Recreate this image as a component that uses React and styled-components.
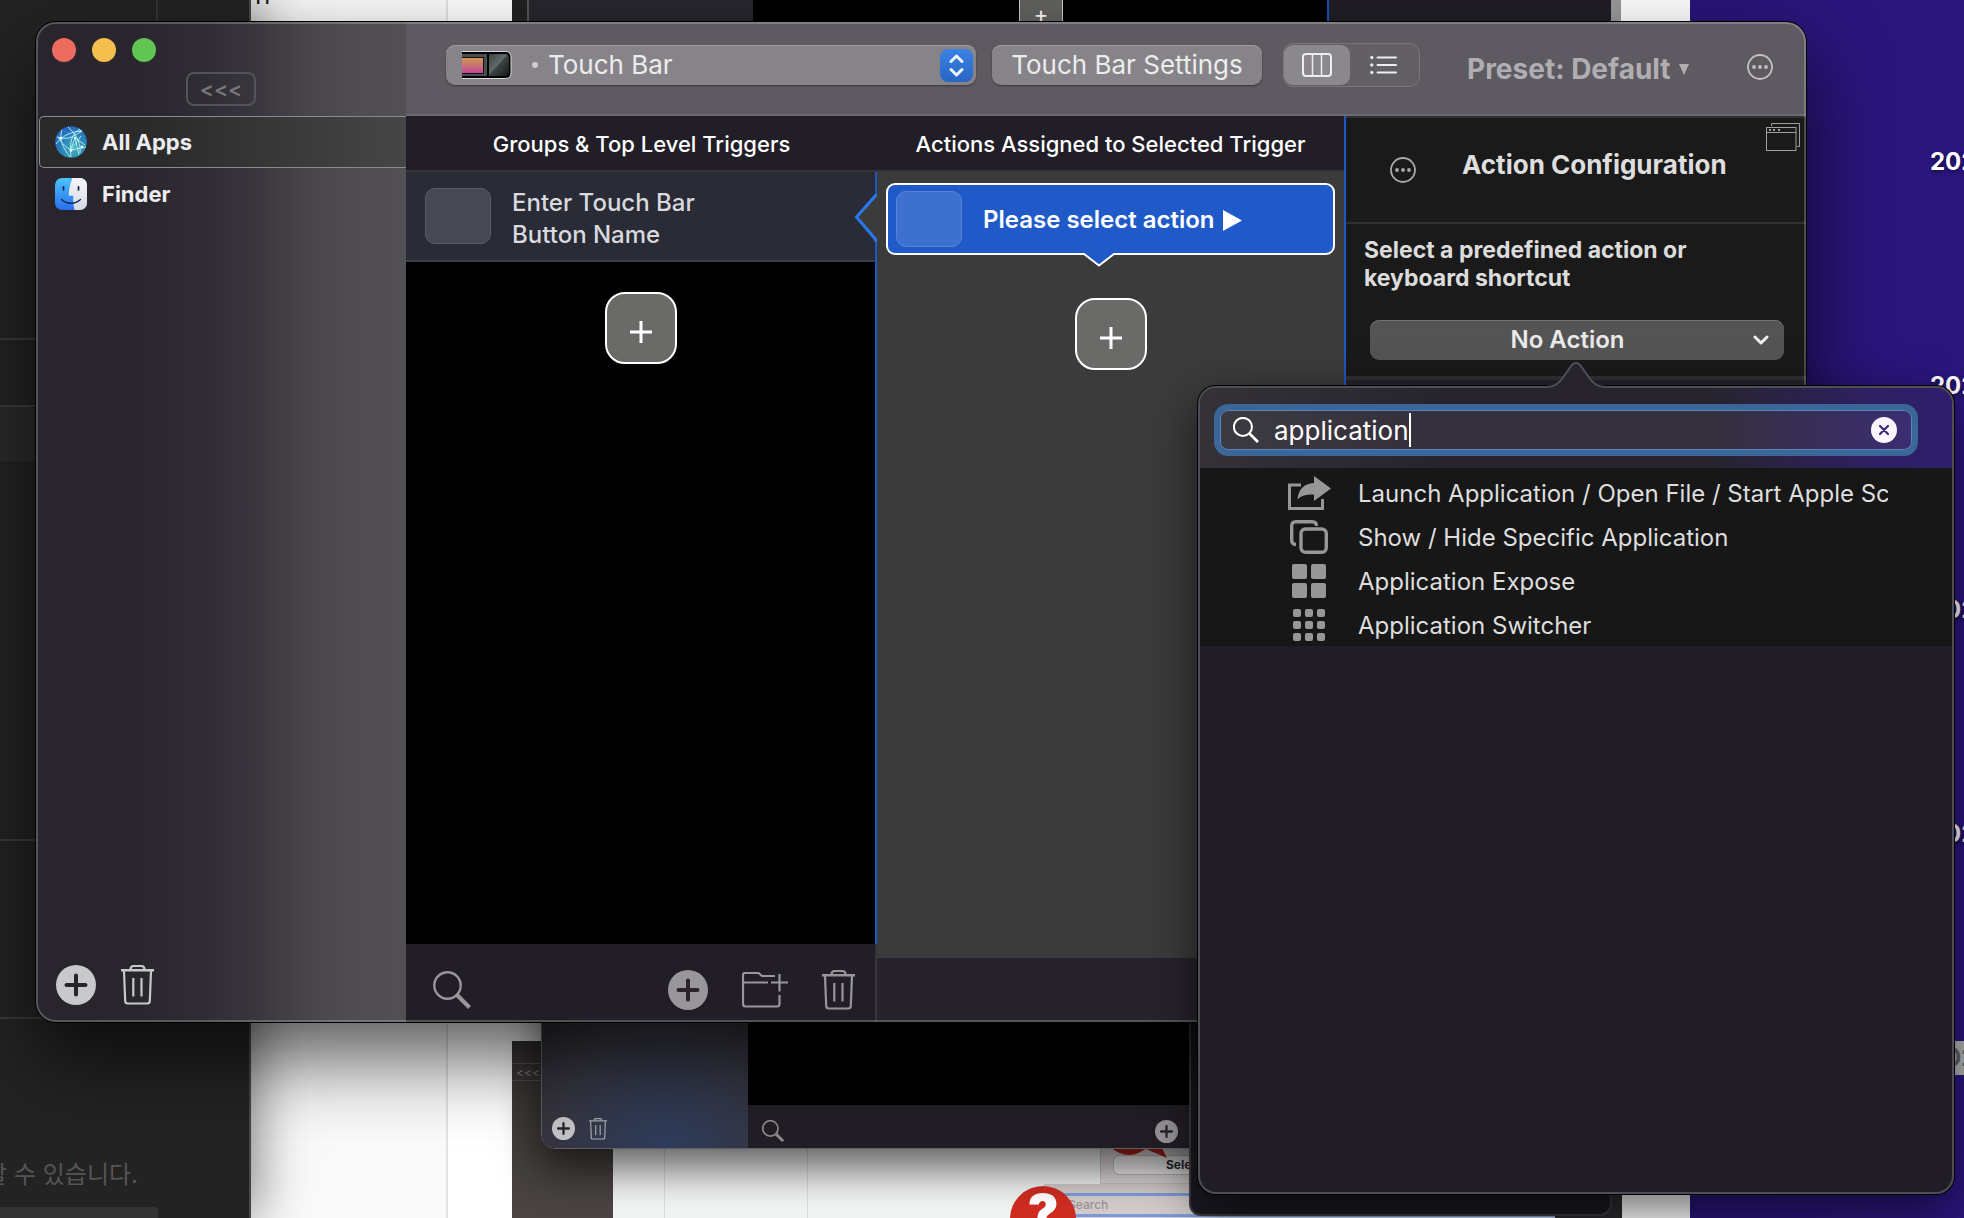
import React from "react";
import styled, { createGlobalStyle } from "styled-components";

const GlobalStyle = createGlobalStyle`
  *, *::before, *::after { box-sizing: border-box; }
  body {
    margin: 0;
    overflow: hidden;
    background: #29157a;
    color: #dfdfe2;
    font-family: Inter, "Noto Sans CJK KR", sans-serif;
    font-size: 22px;
    line-height: 28px;
  }
  button, input, select {
    margin: 0;
    padding: 0;
    border: 0;
    background: none;
    color: inherit;
    font: inherit;
    appearance: none;
    outline: none;
  }
  svg { display: block; flex: none; }
  h1, h2, p, ul { margin: 0; padding: 0; font: inherit; list-style: none; }
`;

/* ---------- Desktop and the windows behind ---------- */

const Desktop = styled.div`
  position: relative;
  height: 100vh;
  overflow: hidden;
  background: linear-gradient(90deg, #29157a 90%, #2b167f);
`;

const DateColumn = styled.div`
  position: absolute;
  top: 145px;
  right: 0;
  width: 34px;
  display: flex;
  flex-direction: column;
  gap: 190px;
  overflow: hidden;
`;

const DateLabel = styled.span`
  height: 34px;
  font-size: 24px;
  font-weight: 700;
  line-height: 34px;
  color: ${(p) => (p.$selected ? "#666" : "#fff")};
  background: ${(p) => (p.$selected ? "#bababa" : "none")};
  text-shadow: ${(p) => (p.$selected ? "none" : "0 2px 4px #0008")};
`;

const PageWindow = styled.div`
  position: absolute;
  top: 0;
  bottom: 0;
  left: 251px;
  right: 274px;
  display: flex;
  overflow: hidden;
  background: #fff;
`;

const PageMargin = styled.div`
  width: 197px;
  padding-left: 4px;
  margin-top: -19px;
  color: #222;
  font-size: 26px;
  background: #fafafa;
  border-right: 2px solid #e2e2e2;
`;

const DarkWindow = styled.div`
  position: absolute;
  top: 0;
  bottom: 0;
  left: 0;
  width: 251px;
  display: flex;
  flex-direction: column;
  background: #232323;
  border-right: 2px solid #454545;
  box-shadow: 0 0 56px #0009;
`;

const DarkSection = styled.div`
  height: ${(p) => p.$height}px;
  flex: none;
  background: ${(p) => (p.$raised ? "#2b2b2b" : "none")};
  border-bottom: 2px solid ${(p) => (p.$line ? "#3a3a3a" : "transparent")};
`;

const DarkDivider = styled.div`
  width: 158px;
  height: 21px;
  border-right: 2px solid #333;
`;

const DarkNote = styled.div`
  flex: 1;
  display: flex;
  flex-direction: column;
  justify-content: space-between;
  padding-top: 142px;
`;

const NoteText = styled.p`
  display: flex;
  justify-content: flex-end;
  width: 138px;
  overflow: hidden;
  white-space: nowrap;
  color: #555;
  font-size: 24px;
  line-height: 28px;
`;

const NoteButton = styled.div`
  width: 158px;
  height: 11px;
  background: #333;
  border-radius: 0 4px 0 0;
`;

const UpperWindow = styled.div`
  position: absolute;
  top: 0;
  left: 512px;
  right: 343px;
  height: 200px;
  display: grid;
  grid-template-columns: 226px 576px 1fr;
  border-left: 15px solid #222;
  border-right: 10px solid #9a9a9a;
  background: #201d26;
`;

const Pane = styled.div`
  background: ${(p) => p.$color};
  border-right: ${(p) => (p.$line ? "2px solid #1d50b4" : "0")};
  border-left: ${(p) => (p.$edge ? "2px solid #555" : "0")};
`;

const UpperPlus = styled.div`
  width: 44px;
  height: 32px;
  margin: 0 0 0 266px;
  border: 1px solid #ccc;
  border-top: 0;
  color: #fff;
  background: #62625f;
  text-align: center;
`;

const PictureSheet = styled.div`
  position: absolute;
  bottom: 0;
  left: 512px;
  width: 1110px;
  height: 177px;
  display: flex;
  background: #2b2b2e;
`;

const PictureSidebar = styled.div`
  width: 101px;
  padding-top: 22px;
  background: linear-gradient(#3a3535, #4b4444);
  color: #8a8585;
  font-size: 12px;
  line-height: 18px;
`;

const PictureTag = styled.span`
  display: block;
  height: 18px;
  padding-left: 4px;
  border: 1px solid #5a5555;
  border-left: 0;
`;

const PictureBody = styled.div`
  width: 942px;
  display: grid;
  grid-template-columns: 52px 143px 1fr;
  background: #f2f3f3;
`;

const PictureColumn = styled.div`
  border-right: 1px solid #dadcdc;
`;

const PictureForm = styled.div`
  padding-left: 236px;
  color: #2a2a2a;
  font-size: 12px;
  font-weight: 700;
  line-height: 18px;
`;

const FormPanel = styled.div`
  position: relative;
  height: 143px;
  margin-left: 56px;
  padding: 113px 0 0 12px;
  background: #dcd6d7;
  border: 1px solid #c6c0c1;
`;

const FormField = styled.div`
  height: 20px;
  padding-left: 52px;
  background: #f4f0f0;
  border: 1px solid #bbb;
  border-radius: 6px;
`;

const Callout = styled.svg`
  position: absolute;
  top: 104px;
  left: 8px;
`;

const FormSearch = styled.div`
  height: 34px;
  padding-top: 9px;
  background: #d3cbcc;
`;

const FormSearchField = styled.div`
  height: 24px;
  padding-left: 24px;
  border: solid #7c9bd8;
  border-width: 3px 0;
  color: #989496;
  font-weight: 500;
`;

const Marker = styled.div`
  position: absolute;
  left: 1010px;
  bottom: -34px;
  width: 66px;
  height: 66px;
  border-radius: 50%;
  background: #cf2c21;
  color: #fff;
  font-size: 52px;
  font-weight: 900;
  line-height: 56px;
  text-align: center;
`;

const LowerWindow = styled.div`
  position: absolute;
  bottom: 69px;
  left: 541px;
  width: 700px;
  height: 200px;
  display: grid;
  grid-template-columns: 206px 1fr;
  overflow: hidden;
  border: 1px solid #606064;
  border-radius: 14px;
  background: #000;
  box-shadow: 0 20px 40px #0009;
`;

const LowerSidebar = styled.div`
  display: flex;
  align-items: flex-end;
  gap: 14px;
  padding: 0 0 8px 10px;
  background: radial-gradient(circle at 60% 100%, #2e3c5c, #353540 50%, #262428 90%);
`;

const LowerMain = styled.div`
  display: flex;
  flex-direction: column;
  justify-content: flex-end;
`;

const LowerBar = styled.div`
  display: flex;
  align-items: center;
  gap: 371px;
  height: 43px;
  padding: 9px 14px 0;
  background: #221e26;
`;

const LowerPopover = styled.div`
  position: absolute;
  bottom: 2px;
  left: 1189px;
  width: 423px;
  height: 260px;
  background: #1c1922;
  border: 2px solid #3c3a3f;
  border-radius: 12px;
`;

/* ---------- Main window ---------- */

const Window = styled.main`
  position: absolute;
  top: 22px;
  bottom: 196px;
  left: 36px;
  right: 158px;
  display: grid;
  grid-template-columns: 370px minmax(0, 1fr);
  overflow: hidden;
  border-radius: 20px;
  background: #221e28;

  &::after {
    content: "";
    position: absolute;
    inset: 0;
    border: 2px solid #ffffff38;
    border-radius: 20px;
    pointer-events: none;
  }
`;

const WindowShadow = styled.div`
  position: absolute;
  top: 22px;
  bottom: 196px;
  left: 36px;
  right: 158px;
  border-radius: 20px;
  box-shadow: 0 0 0 1px #000, 0 36px 80px #000000a8;
`;

const Sidebar = styled.aside`
  display: flex;
  flex-direction: column;
  background: linear-gradient(90deg, #28252c 25%, #2f2d33 45%, #38363c 58%, #48464b 74%, #4f4d52 86%, #524f55);
`;

const SidebarTop = styled.div`
  height: 94px;
  padding: 16px 16px 0;
`;

const Lights = styled.div`
  display: flex;
  gap: 16px;
`;

const Light = styled.button`
  width: 24px;
  height: 24px;
  border-radius: 50%;
  background: ${(p) => p.$color};
`;

const CollapseButton = styled.button`
  display: block;
  width: 70px;
  height: 34px;
  margin: 10px 0 0 134px;
  padding-top: 2px;
  border: 2px solid #55535a;
  border-radius: 8px;
  color: #77757b;
  font-size: 21px;
  font-weight: 600;
  line-height: 28px;
`;

const AppRow = styled.button`
  display: flex;
  align-items: center;
  gap: 15px;
  width: 367px;
  height: 52px;
  margin-left: 3px;
  padding-left: 15px;
  border: 1px solid ${(p) => (p.$selected ? "#8b8b8d" : "transparent")};
  border-right: 0;
  border-radius: 5px 0 0 5px;
  background: ${(p) => (p.$selected ? "linear-gradient(90deg, #2a2a2b 30%, #464646)" : "none")};
  color: #ececee;
  font-weight: 700;
  text-align: left;
`;

const SidebarActions = styled.div`
  display: flex;
  gap: 25px;
  margin-top: auto;
  padding: 0 20px 17px;
  color: #c9c8ca;
`;

const IconButton = styled.button`
  display: flex;
  align-items: center;
  justify-content: center;
`;

const Content = styled.section`
  display: flex;
  flex-direction: column;
  min-width: 0;
`;

const Toolbar = styled.header`
  display: flex;
  align-items: center;
  height: 94px;
  padding: 0 33px 6px 40px;
  background: #5e5a61;
  border-bottom: 2px solid #6d6a70;
  font-size: 26px;
`;

const DevicePicker = styled.label`
  flex: 1;
  display: flex;
  align-items: center;
  height: 40px;
  padding: 0 3px 0 16px;
  border-radius: 9px;
  background: #878489;
  box-shadow: inset 0 1px 0 #a09da2, 0 1px 2px #0006;
  color: #ececec;
`;

const Bullet = styled.span`
  width: 6px;
  height: 6px;
  margin: 0 10px 0 20px;
  border-radius: 50%;
  background: #cfcdd0;
`;

const DeviceSelect = styled.select`
  flex: 1;
  height: 36px;
`;

const Stepper = styled.span`
  display: flex;
  align-items: center;
  justify-content: center;
  width: 33px;
  height: 33px;
  border-radius: 8px;
  background: linear-gradient(#3b82e4, #2765c4);
`;

const SettingsButton = styled.button`
  width: 270px;
  height: 40px;
  margin: 0 21px 0 16px;
  border-radius: 9px;
  background: #878489;
  box-shadow: inset 0 1px 0 #a09da2, 0 1px 2px #0006;
  color: #ececec;
  white-space: nowrap;
`;

const Segments = styled.div`
  display: flex;
  width: 137px;
  height: 44px;
  padding: 1px 0;
  border: 1px solid #77747a;
  border-radius: 10px;
  background: #625f65;
`;

const Segment = styled.button`
  width: 66px;
  display: flex;
  align-items: center;
  justify-content: center;
  border-radius: 9px;
  background: ${(p) => (p.$selected ? "#8b888d" : "none")};
  color: #eee;
`;

const PresetButton = styled.button`
  display: flex;
  align-items: center;
  gap: 8px;
  width: 280px;
  margin-left: 47px;
  padding-top: 8px;
  color: #b0aeb2;
  font-size: 28px;
  font-weight: 700;
  white-space: nowrap;
`;

const MoreButton = styled(IconButton)`
  padding-top: 4px;
`;

const Columns = styled.div`
  flex: 1;
  display: grid;
  grid-template-columns: minmax(0, 471fr) minmax(0, 467fr) 462px;
  min-height: 0;
`;

const Column = styled.section`
  display: flex;
  flex-direction: column;
  min-width: 0;
`;

const ColumnTitle = styled.h2`
  height: 56px;
  background: #211e28;
  border-bottom: 2px solid #35323a;
  color: #fff;
  font-size: 22px;
  font-weight: 500;
  line-height: 56px;
  text-align: center;
  white-space: nowrap;
`;

const TriggerArea = styled.div`
  flex: 1;
  display: flex;
  flex-direction: column;
  align-items: center;
  background: #000;
  border-right: 2px solid #1f57c4;
`;

const TriggerRow = styled.button`
  position: relative;
  display: flex;
  align-items: center;
  gap: 21px;
  width: 100%;
  height: 90px;
  padding-left: 19px;
  background: #292b37;
  border-bottom: 2px solid #3b3c48;
  color: #d9dadd;
  font-size: 24px;
  font-weight: 500;
  line-height: 32px;
  text-align: left;
`;

const TriggerName = styled.span`
  padding-top: 5px;
`;

const Notch = styled.svg`
  position: absolute;
  top: 22px;
  right: -2px;
`;

const Swatch = styled.span`
  flex: none;
  width: 66px;
  height: 56px;
  border: 1px solid ${(p) => (p.$active ? "#5584d8" : "#5c5d68")};
  border-radius: 10px;
  background: ${(p) => (p.$active ? "#3d70cf" : "#474853")};
`;

const AddTile = styled.button`
  width: 72px;
  height: 72px;
  margin-top: 30px;
  display: flex;
  align-items: center;
  justify-content: center;
  padding-top: 8px;
  border: 2px solid #fff;
  border-radius: 20px;
  background: #6a6a68;
`;

const ActionArea = styled.div`
  flex: 1;
  display: flex;
  flex-direction: column;
  align-items: center;
  padding: 11px 9px 0;
  background: #3b3b3b;
`;

const ActionCard = styled.button`
  position: relative;
  display: flex;
  align-items: center;
  gap: 21px;
  width: 100%;
  height: 72px;
  margin-bottom: 13px;
  padding-left: 8px;
  border: 2px solid #fff;
  border-radius: 9px;
  background: #1f5ac8;
  color: #fff;
  font-size: 24px;
  font-weight: 600;
`;

const CardTail = styled.svg`
  position: absolute;
  top: 68px;
  left: 194px;
`;

const CardLabel = styled.span`
  display: flex;
  align-items: center;
  gap: 8px;
  padding-top: 2px;
`;

const TriggerBar = styled.footer`
  display: flex;
  align-items: center;
  height: 78px;
  padding: 14px 20px 0 27px;
  border-right: 2px solid #37343d;
  color: #98959b;
`;

const BarTools = styled.div`
  display: flex;
  align-items: center;
  gap: 34px;
  margin-left: auto;
`;

const ActionBar = styled.footer`
  height: 64px;
  background: #27232d;
`;

const Config = styled(Column)`
  border-left: 2px solid #1f57c4;
  background: #25222c;
`;

const ConfigHeader = styled.div`
  position: relative;
  display: flex;
  align-items: center;
  gap: 46px;
  height: 108px;
  padding: 0 0 0 44px;
  border: solid #303032;
  border-width: 2px 0;
  background: #1a1a1a;
  color: #a9a9aa;
`;

const ConfigTitle = styled.h1`
  padding-bottom: 10px;
  color: #dedede;
  font-size: 26px;
  font-weight: 700;
`;

const DetachButton = styled(IconButton)`
  position: absolute;
  top: 5px;
  right: 6px;
`;

const ConfigBody = styled.div`
  padding: 12px 22px 16px 24px;
  border-bottom: 4px solid #303032;
  background: #1a1a1a;
`;

const ConfigLabel = styled.label`
  display: block;
  width: 350px;
  margin: 0 0 28px -6px;
  color: #dcdcdc;
  font-size: 23px;
  font-weight: 700;
  line-height: 28px;
`;

const ActionPicker = styled.div`
  display: flex;
  align-items: center;
  height: 40px;
  padding: 0 15px 0 0;
  border-radius: 9px;
  background: #545454;
  box-shadow: inset 0 1px 0 #707070;
`;

const ActionSelect = styled.select`
  flex: 1;
  height: 40px;
  padding-left: 12px;
  color: #e9e9e9;
  font-size: 24px;
  font-weight: 600;
  text-align-last: center;
`;

/* ---------- Search popover ---------- */

const Popover = styled.section`
  position: absolute;
  top: 386px;
  right: 10px;
  bottom: 24px;
  width: 756px;
  display: flex;
  flex-direction: column;
  border: 2px solid #504d57;
  border-radius: 18px;
  background: #201d27;
  box-shadow: 0 0 0 1px #000, 0 16px 50px #0009;
`;

const PopoverArrow = styled.svg`
  position: absolute;
  top: -26px;
  left: 50%;
  transform: translateX(-50%);
`;

const PopoverHead = styled.div`
  padding: 16px 34px 12px 14px;
  border-radius: 16px 16px 0 0;
  background: linear-gradient(90deg, #343237, #27242e 32%, #27242e 68%, #2d2060 88%, #2e1e6e);
`;

const SearchBox = styled.label`
  display: flex;
  align-items: center;
  height: 52px;
  padding: 0 15px 0 13px;
  border: 6px solid #3a6797;
  border-radius: 14px;
  background: linear-gradient(90deg, #3c3a41, #34303c 32%, #34303c 70%, #3a2d72);
  box-shadow: inset 0 0 0 1px #5a86c0;
  color: #fff;
`;

const SearchInput = styled.input`
  field-sizing: content;
  margin-left: 15px;
  padding-top: 2px;
  caret-color: transparent;
  font-size: 26px;
  line-height: 32px;
`;

const Caret = styled.span`
  width: 2px;
  height: 34px;
  background: #fff;
`;

const ClearButton = styled(IconButton)`
  width: 26px;
  height: 26px;
  margin-left: auto;
  border-radius: 50%;
  background: #faf5ff;
`;

const Results = styled.ul`
  padding: 2px 64px 0 84px;
  background: #171717;
`;

const Result = styled.button`
  display: grid;
  grid-template-columns: 50px minmax(0, 1fr);
  align-items: center;
  gap: 24px;
  width: 100%;
  height: 44px;
  color: #979797;
  text-align: left;
`;

const ResultIcon = styled.span`
  display: flex;
  justify-content: center;
  padding-top: 2px;
`;

const ResultText = styled.span`
  padding-top: 4px;
  overflow: hidden;
  color: #dedede;
  font-size: 24px;
  line-height: 32px;
  white-space: nowrap;
`;

/* ---------- Icons ---------- */

const PlusCircle = ({ size = 40, hole = "#27242b", color = "currentColor" }) => (
  <svg width={size} height={size} viewBox="0 0 40 40">
    <circle cx="20" cy="20" r="20" fill={color} />
    <path d="M20 10.5v19M10.5 20h19" stroke={hole} strokeWidth="4" strokeLinecap="round" />
  </svg>
);

const Trash = ({ width = 33, color = "currentColor" }) => (
  <svg width={width} height={(width * 40) / 33} viewBox="0 0 33 40" fill="none" stroke={color} strokeWidth="2.2">
    <path d="M0 5.2h33" strokeWidth="2.6" />
    <path d="M9.5 4.5C9.5 2 10.5 1 13 1h7c2.500 0 3.500 1 3.500 3.500M3 6l1.200 30q.1 2.500 2.600 2.500h19.400q2.500 0 2.600-2.500L30 6M12.300 13v18.500M20.500 13v18.500" />
  </svg>
);

const Magnifier = ({ width = 38, color = "currentColor", handle = 4, ring = 2.4 }) => (
  <svg width={width} height={width} viewBox="0 0 38 38" fill="none" stroke={color}>
    <circle cx="14.500" cy="14.500" r="13.200" strokeWidth={ring} />
    <path d="M24 24l12.500 12.500" strokeWidth={handle} />
  </svg>
);

const FolderPlus = () => (
  <svg width="46" height="36" viewBox="0 0 46 36" fill="none" stroke="currentColor" strokeWidth="2.200">
    <path d="M33 4H20l-3.500-3H3Q1 1 1 3v29q0 2.500 2.500 2.500h31.500q2.500 0 2.500-2.500v-9M1 10.500h25M29 10.500h17M37.500 2v17.500" />
  </svg>
);

const Ellipsis = ({ color = "currentColor" }) => (
  <svg width="26" height="26" viewBox="0 0 26 26">
    <circle cx="13" cy="13" r="12" fill="none" stroke={color} strokeWidth="1.800" />
    <circle cx="7" cy="13" r="1.900" fill={color} />
    <circle cx="13" cy="13" r="1.900" fill={color} />
    <circle cx="19" cy="13" r="1.900" fill={color} />
  </svg>
);

const Plus = () => (
  <svg width="22" height="22" viewBox="0 0 22 22" stroke="#fff" strokeWidth="3">
    <path d="M11 0v22M0 11h22" />
  </svg>
);

const Globe = () => (
  <svg width="32" height="32" viewBox="0 0 32 32">
    <defs>
      <radialGradient id="globe" cx="60%" cy="70%" r="75%">
        <stop offset="0" stopColor="#3fb0b8" />
        <stop offset=".55" stopColor="#2a84b8" />
        <stop offset="1" stopColor="#2560bd" />
      </radialGradient>
    </defs>
    <circle cx="16" cy="16" r="15.800" fill="url(#globe)" />
    <g fill="none" stroke="#bdf2fb" strokeWidth=".9">
      <path d="M2 11c9 3 17 1 25-7M3 11c4 7 8 10 13 13l15-3M7 4c-3 8 0 17 8 27M13 1c8 7 13 16 12 26M25 3c-8 4-11 13-9 28M20 12l10 7M20 12l-5 13M20 12l4 17M1 18c6-8 14-12 25-13M16 24l10-14" />
    </g>
    <g fill="#e8fdff">
      <circle cx="6" cy="12" r="1.600" />
      <circle cx="20" cy="12" r="1.200" />
      <circle cx="16" cy="24.500" r="1.400" />
      <circle cx="27" cy="21" r="1.400" />
      <circle cx="25.500" cy="5.500" r="1.100" />
    </g>
  </svg>
);

const FinderFace = () => (
  <svg width="32" height="32" viewBox="0 0 32 32">
    <defs>
      <linearGradient id="faceBlue" x2="0" y2="1">
        <stop offset="0" stopColor="#4cc3fa" />
        <stop offset="1" stopColor="#2a6df0" />
      </linearGradient>
      <linearGradient id="faceWhite" x2="0" y2="1">
        <stop offset="0" stopColor="#f6f6f8" />
        <stop offset="1" stopColor="#d4d9e4" />
      </linearGradient>
      <clipPath id="face"><rect width="32" height="32" rx="7" /></clipPath>
    </defs>
    <g clipPath="url(#face)">
      <rect width="32" height="32" fill="url(#faceBlue)" />
      <path d="M17.500 0C15 6 13.800 12 13.700 17.800h4.600c-.3 5 0 9.500 1.200 14.200H32V0z" fill="url(#faceWhite)" />
      <path d="M8.500 9v2.800M23.500 9v2.800" stroke="#16294f" strokeWidth="1.800" strokeLinecap="round" />
      <path d="M6.500 21.500c5.500 5 13.500 5 19 0" fill="none" stroke="#16294f" strokeWidth="1.300" strokeLinecap="round" />
    </g>
  </svg>
);

const TouchBarIcon = () => (
  <svg width="50" height="30" viewBox="0 0 50 30">
    <defs>
      <linearGradient id="sunset" x2="0" y2="1">
        <stop offset="0" stopColor="#d09a50" />
        <stop offset="1" stopColor="#c2489c" />
      </linearGradient>
      <linearGradient id="glass" x2="1" y2="1">
        <stop offset="0" stopColor="#3a4242" />
        <stop offset=".45" stopColor="#626a6a" />
        <stop offset=".5" stopColor="#3c4343" />
        <stop offset="1" stopColor="#151818" />
      </linearGradient>
    </defs>
    <path d="M0 1h43q6.500 0 6.500 6.500v15q0 6.500-6.500 6.500H0z" fill="#d5d9da" />
    <path d="M0 2h43.500q5 0 5 5v16q0 5-5 5H0z" fill="#000" />
    <path d="M0 4h25v22H0z" fill="#4a4e4e" />
    <rect x="0" y="7" width="22" height="17" fill="#111" />
    <rect x="0" y="8" width="21" height="15" fill="url(#sunset)" />
    <path d="M27 4h16q4 0 4 4v14q0 4-4 4H27z" fill="url(#glass)" />
  </svg>
);

const UpDown = () => (
  <svg width="15" height="23" viewBox="0 0 15 23" fill="none" stroke="#f0f4fb" strokeWidth="3" strokeLinecap="round" strokeLinejoin="round">
    <path d="M2 7.500l5.500-5.500 5.500 5.500M2 15.500l5.500 5.500 5.500-5.500" />
  </svg>
);

const ColumnsIcon = () => (
  <svg width="30" height="24" viewBox="0 0 30 24" fill="none" stroke="currentColor" strokeWidth="2">
    <rect x="1" y="1" width="28" height="22" rx="3" />
    <path d="M10.500 1v22M19.500 1v22" strokeWidth="1.500" />
  </svg>
);

const ListIcon = () => (
  <svg width="27" height="20" viewBox="0 0 27 20" fill="currentColor" stroke="currentColor">
    <path d="M7.500 2.500H26M7.500 10H26M7.500 17.500H26" strokeWidth="2" strokeLinecap="round" />
    <circle cx="1.800" cy="2.500" r="1.200" />
    <circle cx="1.800" cy="10" r="1.200" />
    <circle cx="1.800" cy="17.500" r="1.200" />
  </svg>
);

const WindowsIcon = () => (
  <svg width="34" height="28" viewBox="0 0 34 28" fill="none" stroke="#a0a0a0">
    <path d="M5.500 3V.5h28v23H31" />
    <rect x=".5" y="4.500" width="29.500" height="23" />
    <path d="M.5 9.500H30" />
    <path d="M3 7h2M7 7h2M12 7h2" strokeWidth="2" />
  </svg>
);

const ShareIcon = () => (
  <svg width="43" height="34" viewBox="0 0 43 34">
    <path d="M13 9H1.500v23.500h33V23" fill="none" stroke="currentColor" strokeWidth="3" />
    <path d="M26 0l17 12.500L26 25v-6.500c-8 0-13 1-16.500 5C10.300 13.500 16 7.500 26 7z" fill="currentColor" />
  </svg>
);

const CopyIcon = () => (
  <svg width="38" height="34" viewBox="0 0 38 34" fill="none" stroke="currentColor" strokeWidth="3.400">
    <rect x="11" y="9" width="25.300" height="23.300" rx="4.500" />
    <path d="M26.500 6Q26.500 1.700 22 1.700H6Q1.700 1.700 1.700 6v14Q1.700 24.300 6 24.500" />
  </svg>
);

const TilesIcon = ({ count, size, gap }) => {
  const cells = Array.from({ length: count * count }, (_, i) => i);
  const total = count * size + (count - 1) * gap;
  return (
    <svg width={total} height={total} viewBox={`0 0 ${total} ${total}`} fill="currentColor">
      {cells.map((i) => (
        <rect
          key={i}
          x={(i % count) * (size + gap)}
          y={Math.floor(i / count) * (size + gap)}
          width={size}
          height={size}
          rx="2"
        />
      ))}
    </svg>
  );
};

const results = [
  { label: "Launch Application / Open File / Start Apple Script", icon: <ShareIcon /> },
  { label: "Show / Hide Specific Application", icon: <CopyIcon /> },
  { label: "Application Expose", icon: <TilesIcon count={2} size={15} gap={4} /> },
  { label: "Application Switcher", icon: <TilesIcon count={3} size={8} gap={4} /> },
];

const dates = ["2021", "2021", "2021", "2021", "2021"];

function Backdrop() {
  return (
    <>
      <DateColumn>
        {dates.map((date, i) => (
          <DateLabel key={i} $selected={i === 4}>{date}</DateLabel>
        ))}
      </DateColumn>
      <PageWindow>
        <PageMargin>n</PageMargin>
      </PageWindow>
      <UpperWindow>
        <Pane $color="#29262e" $edge />
        <Pane $color="#000" $line>
          <UpperPlus>+</UpperPlus>
        </Pane>
        <Pane $color="#201d26" />
      </UpperWindow>
      <PictureSheet>
        <PictureSidebar>
          <PictureTag>&lt;&lt;&lt;</PictureTag>
        </PictureSidebar>
        <PictureBody>
          <PictureColumn />
          <PictureColumn />
          <PictureForm>
            <FormPanel>
              <FormField>Select</FormField>
              <Callout width="60" height="14" viewBox="0 0 60 14" fill="#b3241c">
                <path d="M0 0h40Q20 18 0 0zM30 0h22l6 12z" />
              </Callout>
            </FormPanel>
            <FormSearch>
              <FormSearchField>Search</FormSearchField>
            </FormSearch>
          </PictureForm>
        </PictureBody>
      </PictureSheet>
      <Marker>?</Marker>
      <LowerWindow>
        <LowerSidebar>
          <PlusCircle size={23} color="#c4c4c6" />
          <Trash width={18} color="#a8a8ac" />
        </LowerSidebar>
        <LowerMain>
          <LowerBar>
            <Magnifier width={22} color="#8d8a90" handle={5} ring={3} />
            <PlusCircle size={23} color="#98959a" />
          </LowerBar>
        </LowerMain>
      </LowerWindow>
      <LowerPopover />
      <DarkWindow>
        <DarkDivider />
        <DarkSection $height={319} $line />
        <DarkSection $height={67} $line />
        <DarkSection $height={54} $raised />
        <DarkSection $height={380} $line />
        <DarkSection $height={178} $line />
        <DarkNote>
          <NoteText>할 수 있습니다.</NoteText>
          <NoteButton />
        </DarkNote>
      </DarkWindow>
    </>
  );
}

function AppSidebar() {
  return (
    <Sidebar>
      <SidebarTop>
        <Lights>
          <Light $color="#ed6a5e" aria-label="Close" />
          <Light $color="#f5bf4f" aria-label="Minimize" />
          <Light $color="#61c554" aria-label="Zoom" />
        </Lights>
        <CollapseButton>&lt;&lt;&lt;</CollapseButton>
      </SidebarTop>
      <AppRow $selected><Globe />All Apps</AppRow>
      <AppRow><FinderFace />Finder</AppRow>
      <SidebarActions>
        <IconButton aria-label="Add app"><PlusCircle /></IconButton>
        <IconButton aria-label="Delete app"><Trash /></IconButton>
      </SidebarActions>
    </Sidebar>
  );
}

function TopBar() {
  return (
    <Toolbar>
      <DevicePicker>
        <TouchBarIcon />
        <Bullet />
        <DeviceSelect aria-label="Device" defaultValue="Touch Bar">
          <option>Touch Bar</option>
        </DeviceSelect>
        <Stepper><UpDown /></Stepper>
      </DevicePicker>
      <SettingsButton>Touch Bar Settings</SettingsButton>
      <Segments>
        <Segment $selected aria-label="Columns"><ColumnsIcon /></Segment>
        <Segment aria-label="List"><ListIcon /></Segment>
      </Segments>
      <PresetButton>
        Preset: Default
        <svg width="10" height="11" viewBox="0 0 10 11"><path d="M0 0h10L5 11z" fill="currentColor" /></svg>
      </PresetButton>
      <MoreButton aria-label="More"><Ellipsis color="#c2c0c4" /></MoreButton>
    </Toolbar>
  );
}

export default function App() {
  return (
    <>
      <GlobalStyle />
      <Desktop>
        <Backdrop />
        <WindowShadow />
        <Window>
          <AppSidebar />
          <Content>
            <TopBar />
            <Columns>
              <Column>
                <ColumnTitle>Groups &amp; Top Level Triggers</ColumnTitle>
                <TriggerArea>
                  <TriggerRow>
                    <Swatch />
                    <TriggerName>Enter Touch Bar<br />Button Name</TriggerName>
                    <Notch width="23" height="48" viewBox="0 0 23 48">
                      <path d="M23 0L2 23l21 24z" fill="#3b3b3b" />
                      <path d="M22 0v1L2.500 23 22 46v2" fill="none" stroke="#2a78ee" strokeWidth="3" />
                    </Notch>
                  </TriggerRow>
                  <AddTile aria-label="Add trigger"><Plus /></AddTile>
                </TriggerArea>
                <TriggerBar>
                  <IconButton aria-label="Search"><Magnifier /></IconButton>
                  <BarTools>
                    <IconButton aria-label="Add"><PlusCircle /></IconButton>
                    <IconButton aria-label="New group"><FolderPlus /></IconButton>
                    <IconButton aria-label="Delete"><Trash /></IconButton>
                  </BarTools>
                </TriggerBar>
              </Column>
              <Column>
                <ColumnTitle>Actions Assigned to Selected Trigger</ColumnTitle>
                <ActionArea>
                  <ActionCard>
                    <Swatch $active />
                    <CardLabel>
                      Please select action
                      <svg width="19" height="21" viewBox="0 0 19 21"><path d="M0 0l19 10.500L0 21z" fill="#fff" /></svg>
                    </CardLabel>
                    <CardTail width="34" height="14" viewBox="0 0 34 14">
                      <path d="M0 0v1h2l15 12L32 1h2V0z" fill="#1f5ac8" />
                      <path d="M0 1h2l15 11.500L32 1h2" fill="none" stroke="#fff" strokeWidth="2" />
                    </CardTail>
                  </ActionCard>
                  <AddTile aria-label="Add action"><Plus /></AddTile>
                </ActionArea>
                <ActionBar />
              </Column>
              <Config>
                <ConfigHeader>
                  <IconButton aria-label="Options"><Ellipsis /></IconButton>
                  <ConfigTitle>Action Configuration</ConfigTitle>
                  <DetachButton aria-label="Open in window"><WindowsIcon /></DetachButton>
                </ConfigHeader>
                <ConfigBody>
                  <ConfigLabel htmlFor="action">Select a predefined action or keyboard shortcut</ConfigLabel>
                  <ActionPicker>
                    <ActionSelect id="action" defaultValue="No Action">
                      <option>No Action</option>
                    </ActionSelect>
                    <svg width="16" height="12" viewBox="0 0 16 12" fill="none" stroke="#eee" strokeWidth="3" strokeLinecap="round" strokeLinejoin="round">
                      <path d="M2 3l6 6 6-6" />
                    </svg>
                  </ActionPicker>
                </ConfigBody>
              </Config>
            </Columns>
          </Content>
        </Window>
        <Popover>
          <PopoverArrow width="60" height="27" viewBox="0 0 60 27">
            <path d="M0 25C10 25 14 20 18 14L26 3Q30-1 34 3l8 11c4 6 8 11 18 11v2H0z" fill="#27242e" />
            <path d="M0 25C10 25 14 20 18 14L26 3Q30-1 34 3l8 11c4 6 8 11 18 11" fill="none" stroke="#504d57" strokeWidth="2" />
          </PopoverArrow>
          <PopoverHead>
            <SearchBox>
              <Magnifier width={26} ring={3} handle={4} />
              <SearchInput aria-label="Search actions" defaultValue="application" />
              <Caret />
              <ClearButton aria-label="Clear">
                <svg width="10" height="10" viewBox="0 0 10 10" stroke="#38286f" strokeWidth="2.200" strokeLinecap="round">
                  <path d="M1 1l8 8M9 1L1 9" />
                </svg>
              </ClearButton>
            </SearchBox>
          </PopoverHead>
          <Results>
            {results.map((r) => (
              <li key={r.label}>
                <Result>
                  <ResultIcon>{r.icon}</ResultIcon>
                  <ResultText>{r.label}</ResultText>
                </Result>
              </li>
            ))}
          </Results>
        </Popover>
      </Desktop>
    </>
  );
}
